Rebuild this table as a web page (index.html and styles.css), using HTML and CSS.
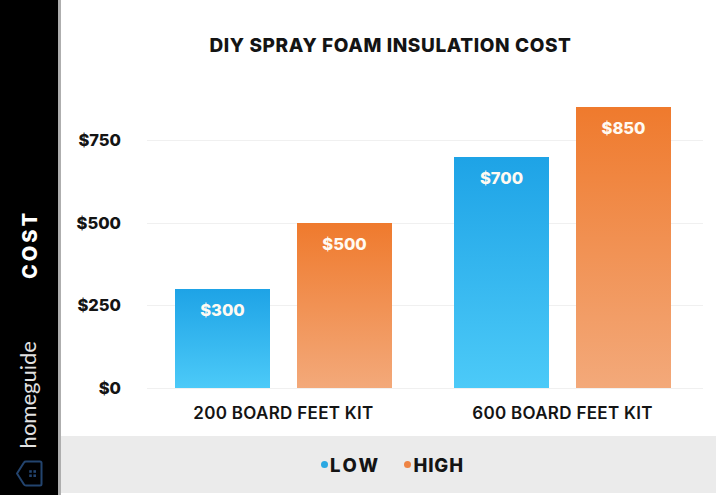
FILE: index.html
```html
<!DOCTYPE html>
<html lang="en">
<head>
<meta charset="utf-8">
<title>DIY Spray Foam Insulation Cost</title>
<link rel="stylesheet" href="styles.css">
</head>
<body>
<div class="page">
  <aside class="sidebar">
    <div class="axis-title">COST</div>
    <div class="brand">homeguide</div>
    <svg class="brand-icon" width="28" height="27" viewBox="0 0 28 27" aria-hidden="true">
      <path d="M2 13.5 L9 2.5 Q9.6 1.5 11 1.5 L25 1.5 Q26.5 1.5 26.5 3 L26.5 24 Q26.5 25.5 25 25.5 L11 25.5 Q9.6 25.5 9 24.5 Z" fill="none" stroke="#23446e" stroke-width="2" stroke-linejoin="round"/>
      <rect x="14.2" y="10.2" width="2.6" height="2.6" fill="#23446e"/>
      <rect x="18.4" y="10.2" width="2.6" height="2.6" fill="#23446e"/>
      <rect x="14.2" y="14.4" width="2.6" height="2.6" fill="#23446e"/>
      <rect x="18.4" y="14.4" width="2.6" height="2.6" fill="#23446e"/>
    </svg>
  </aside>
  <main class="main">
    <h1 class="title">DIY SPRAY FOAM INSULATION COST</h1>
    <section class="chart">
      <div class="scale">
        <div class="tick"><span class="tick-label">$750</span><span class="tick-line"></span></div>
        <div class="tick"><span class="tick-label">$500</span><span class="tick-line"></span></div>
        <div class="tick"><span class="tick-label">$250</span><span class="tick-line"></span></div>
        <div class="tick tick-zero"><span class="tick-label">$0</span><span class="tick-line"></span></div>
      </div>
      <div class="groups">
        <div class="group">
          <div class="bars">
            <div class="bar bar-low" style="height:99px"><span class="bar-value">$300</span></div>
            <div class="bar bar-high" style="height:165px"><span class="bar-value">$500</span></div>
          </div>
          <div class="group-label">200 BOARD FEET KIT</div>
        </div>
        <div class="group">
          <div class="bars">
            <div class="bar bar-low" style="height:231px"><span class="bar-value">$700</span></div>
            <div class="bar bar-high" style="height:281px"><span class="bar-value">$850</span></div>
          </div>
          <div class="group-label">600 BOARD FEET KIT</div>
        </div>
      </div>
    </section>
    <footer class="legend">
      <span class="legend-item legend-low"><span class="dot dot-low"></span>LOW</span>
      <span class="legend-item"><span class="dot dot-high"></span>HIGH</span>
    </footer>
  </main>
</div>
</body>
</html>
```
FILE: styles.css
```css
* { box-sizing: border-box; }
html, body { margin: 0; padding: 0; background: #fff; }
body { width: 720px; height: 495px; overflow: hidden; font-family: "Inter", "Liberation Sans", sans-serif; color: #141414; }

.page { display: flex; width: 720px; height: 495px; }

.sidebar {
  width: 61px;
  flex: none;
  background: #000;
  border-right: 3px solid #aeaeae;
  display: flex;
  flex-direction: column;
  align-items: center;
  justify-content: flex-end;
  padding-bottom: 8px;
}
.axis-title {
  writing-mode: vertical-rl;
  transform: rotate(180deg);
  color: #fff;
  font-weight: 800;
  font-size: 20px;
  letter-spacing: 3px;
  line-height: 20px;
  margin-bottom: 62px;
  margin-left: 1px;
}
.brand {
  writing-mode: vertical-rl;
  transform: rotate(180deg);
  color: #e2e2e2;
  font-family: "Lato", "Liberation Sans", sans-serif;
  font-weight: 400;
  font-size: 22px;
  line-height: 22px;
  margin-bottom: 12px;
  margin-left: -2px;
}
.brand-icon { display: block; margin-left: -1px; }

.main { flex: 1; display: flex; flex-direction: column; }

.title {
  margin: 35px 0 0;
  font-size: 19px;
  line-height: 22px;
  font-weight: 800;
  text-align: center;
  letter-spacing: 0.6px;
}

.chart { display: grid; margin-top: 33px; }
.scale, .groups { grid-area: 1 / 1; }

.scale { display: flex; flex-direction: column; padding-top: 50px; }
.tick { display: flex; height: 82.5px; }
.tick-zero { height: 1px; }
.tick-label {
  width: 60px;
  text-align: right;
  font-size: 16.5px;
  font-weight: 800;
  line-height: 18px;
  height: 18px;
  margin-top: -9px;
}
.tick-line { flex: 1; margin-left: 26px; margin-right: 17px; border-top: 1px solid #f0f0f0; }

.groups { display: flex; gap: 62px; padding-left: 114px; align-items: flex-start; }
.group { display: flex; flex-direction: column; align-items: center; }
.bars { display: flex; gap: 27px; height: 298px; align-items: flex-end; }
.bar { width: 95px; display: flex; justify-content: center; padding-top: 12px; }
.bar-low { background: linear-gradient(#1ea3e6, #4ccaf8); }
.bar-high { background: linear-gradient(#ef7a2d, #f3a97a); }
.bar-value { color: #fffaf2; font-size: 16.5px; font-weight: 800; line-height: 18px; }
.group-label { margin-top: 15px; font-size: 17px; font-weight: 600; line-height: 20px; letter-spacing: 0.3px; white-space: nowrap; }

.legend {
  margin-top: auto;
  margin-right: 4px;
  margin-bottom: 2px;
  height: 57px;
  background: #ebebeb;
  display: flex;
  align-items: center;
  justify-content: center;
  gap: 24px;
  padding-left: 8px;
}
.legend-item { display: flex; align-items: center; font-size: 18.5px; font-weight: 800; letter-spacing: 0.9px; }
.legend-low { letter-spacing: 2.4px; }
.dot { width: 7px; height: 7px; border-radius: 50%; margin-right: 2px; }
.dot-low { background: #2aa8e2; }
.dot-high { background: #ee8444; }
```
